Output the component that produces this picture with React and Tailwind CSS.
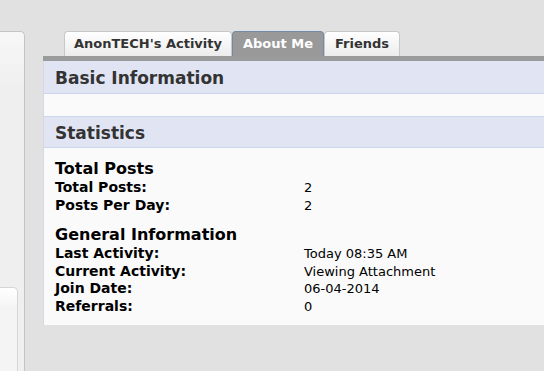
import React from 'react'

const font = { fontFamily: '"DejaVu Sans", Verdana, sans-serif' }

function Tab({ label, active, width }) {
  return (
    <div
      className={
        'h-[25px] flex items-center justify-center rounded-t-[4px] border border-b-0 text-[13px] font-bold ' +
        (active
          ? 'bg-[#999999] border-[#6f8ba6] text-white'
          : 'bg-gradient-to-b from-white to-[#ececec] border-[#c8c8c8] text-[#333]')
      }
      style={{ width }}
    >
      {label}
    </div>
  )
}

function Row({ label, value }) {
  return (
    <div className="grid grid-cols-[249px_1fr] items-center leading-[17.5px] text-black">
      <div className="font-bold text-[14px]">{label}</div>
      <div className="text-[13px]">{value}</div>
    </div>
  )
}

export default function App() {
  return (
    <div className="w-[544px] h-[371px] bg-[#e1e1e1] overflow-hidden flex" style={font}>
      {/* left sidebar stub */}
      <div className="w-[25px] mt-[31px] shrink-0 border-t border-r border-[#c4c4c4] rounded-tr-[5px] bg-gradient-to-b from-[#f7f7f7] to-[#efefef] to-[60px] flex flex-col">
        <div className="mt-[255px] w-[18px] h-[120px] border-t border-r border-[#d6d6d6] rounded-tr-[5px] bg-gradient-to-b from-white to-[#f4f4f4] to-[20px]" />
      </div>

      {/* main */}
      <div className="ml-[18px] flex-1 pt-[31px]">
        <div className="flex pl-[21px]">
          <Tab label="AnonTECH's Activity" width={168} />
          <Tab label="About Me" active width={92} />
          <Tab label="Friends" width={76} />
        </div>
        <div className="h-[5px] bg-[#9b9b9b]" />
        <div className="bg-[#fafafa] border-l border-[#d3d9e6]">
          <div className="h-[33px] flex items-center pt-[3px] px-[11px] bg-[#e1e5f3] border-b border-[#cbd6ea] text-[17px] font-bold text-[#333]">
            Basic Information
          </div>
          <div className="h-[22px]" />
          <div className="h-[32px] flex items-center pt-[3px] px-[11px] bg-[#e1e5f3] border-y border-[#cbd6ea] text-[17px] font-bold text-[#333]">
            Statistics
          </div>
          <div className="px-[11px] pt-[11px] pb-[10px]">
            <div className="text-[16px] font-bold leading-[20px] text-black">Total Posts</div>
            <Row label="Total Posts:" value="2" />
            <Row label="Posts Per Day:" value="2" />
            <div className="mt-[11px] text-[16px] font-bold leading-[20px] text-black">General Information</div>
            <Row label="Last Activity:" value="Today 08:35 AM" />
            <Row label="Current Activity:" value="Viewing Attachment" />
            <Row label="Join Date:" value="06-04-2014" />
            <Row label="Referrals:" value="0" />
          </div>
        </div>
      </div>
    </div>
  )
}
